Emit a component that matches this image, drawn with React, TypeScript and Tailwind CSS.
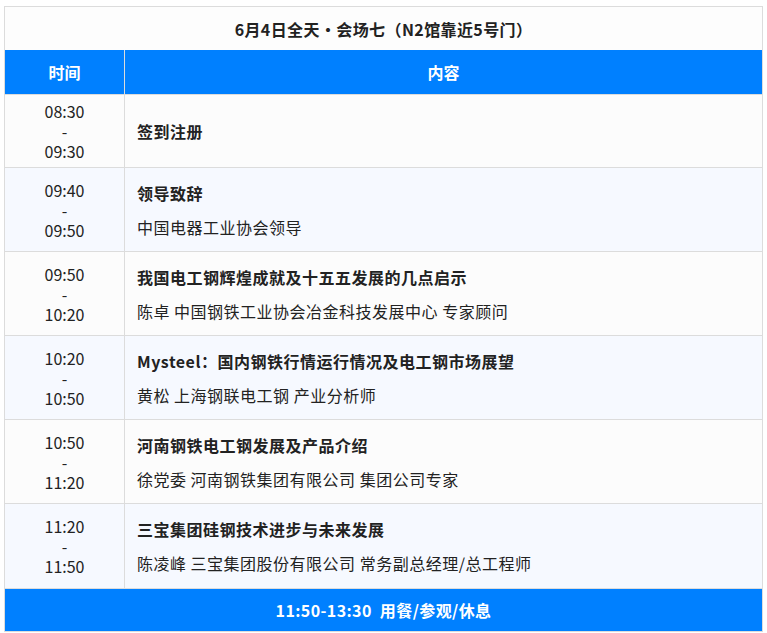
const rows = [
  { t: ["08:30", "09:30"], title: "签到注册", sub: "", h: "h-[73px]" },
  { t: ["09:40", "09:50"], title: "领导致辞", sub: "中国电器工业协会领导", h: "h-[84px]" },
  { t: ["09:50", "10:20"], title: "我国电工钢辉煌成就及十五五发展的几点启示", sub: "陈卓 中国钢铁工业协会冶金科技发展中心 专家顾问", h: "h-[84px]" },
  { t: ["10:20", "10:50"], title: "Mysteel：国内钢铁行情运行情况及电工钢市场展望", sub: "黄松 上海钢联电工钢 产业分析师", h: "h-[84px]" },
  { t: ["10:50", "11:20"], title: "河南钢铁电工钢发展及产品介绍", sub: "徐党委 河南钢铁集团有限公司 集团公司专家", h: "h-[84px]" },
  { t: ["11:20", "11:50"], title: "三宝集团硅钢技术进步与未来发展", sub: "陈凌峰 三宝集团股份有限公司 常务副总经理/总工程师", h: "h-[85px]" },
]

export default function App() {
  return (
    <div className="w-[767px] h-[633px] bg-white pl-[4px] pt-[6px] pr-[4px] text-[16px] text-[#222]" style={{ fontFamily: '"Noto Sans CJK SC", "Noto Sans", sans-serif' }}>
      <div className="border border-[#dcdcdc]">
        <div className="h-[43px] flex items-center justify-center font-bold text-[16px] bg-[#fdfdfd] tracking-[0.4px]">
          6月4日全天•会场七（N2馆靠近5号门）
        </div>
        <div className="h-[44px] flex bg-[#0080ff] text-white font-bold text-[16px]">
          <div className="w-[120px] flex items-center justify-center border-r border-[#dcdcdc]">时间</div>
          <div className="flex-1 flex items-center justify-center">内容</div>
        </div>
        {rows.map((r, i) => (
          <div key={i} className={`${r.h} flex border-t border-[#dcdcdc] ${i % 2 ? "bg-[#f6f9ff]" : "bg-[#fcfcfc]"}`}>
            <div className="w-[120px] flex flex-col items-center justify-center border-r border-[#dcdcdc] leading-[20px]">
              <span>{r.t[0]}</span>
              <span>-</span>
              <span>{r.t[1]}</span>
            </div>
            <div className="flex-1 flex flex-col justify-center pl-[12px] gap-[10px] tracking-[0.5px] leading-[24px]">
              <div className="font-bold">{r.title}</div>
              {r.sub && <div>{r.sub}</div>}
            </div>
          </div>
        ))}
        <div className="h-[43px] flex items-center justify-center bg-[#0080ff] text-white font-bold text-[16px] border-t border-[#dcdcdc] tracking-[0.4px]">
          11:50-13:30&nbsp;&nbsp;用餐/参观/休息
        </div>
      </div>
    </div>
  )
}
